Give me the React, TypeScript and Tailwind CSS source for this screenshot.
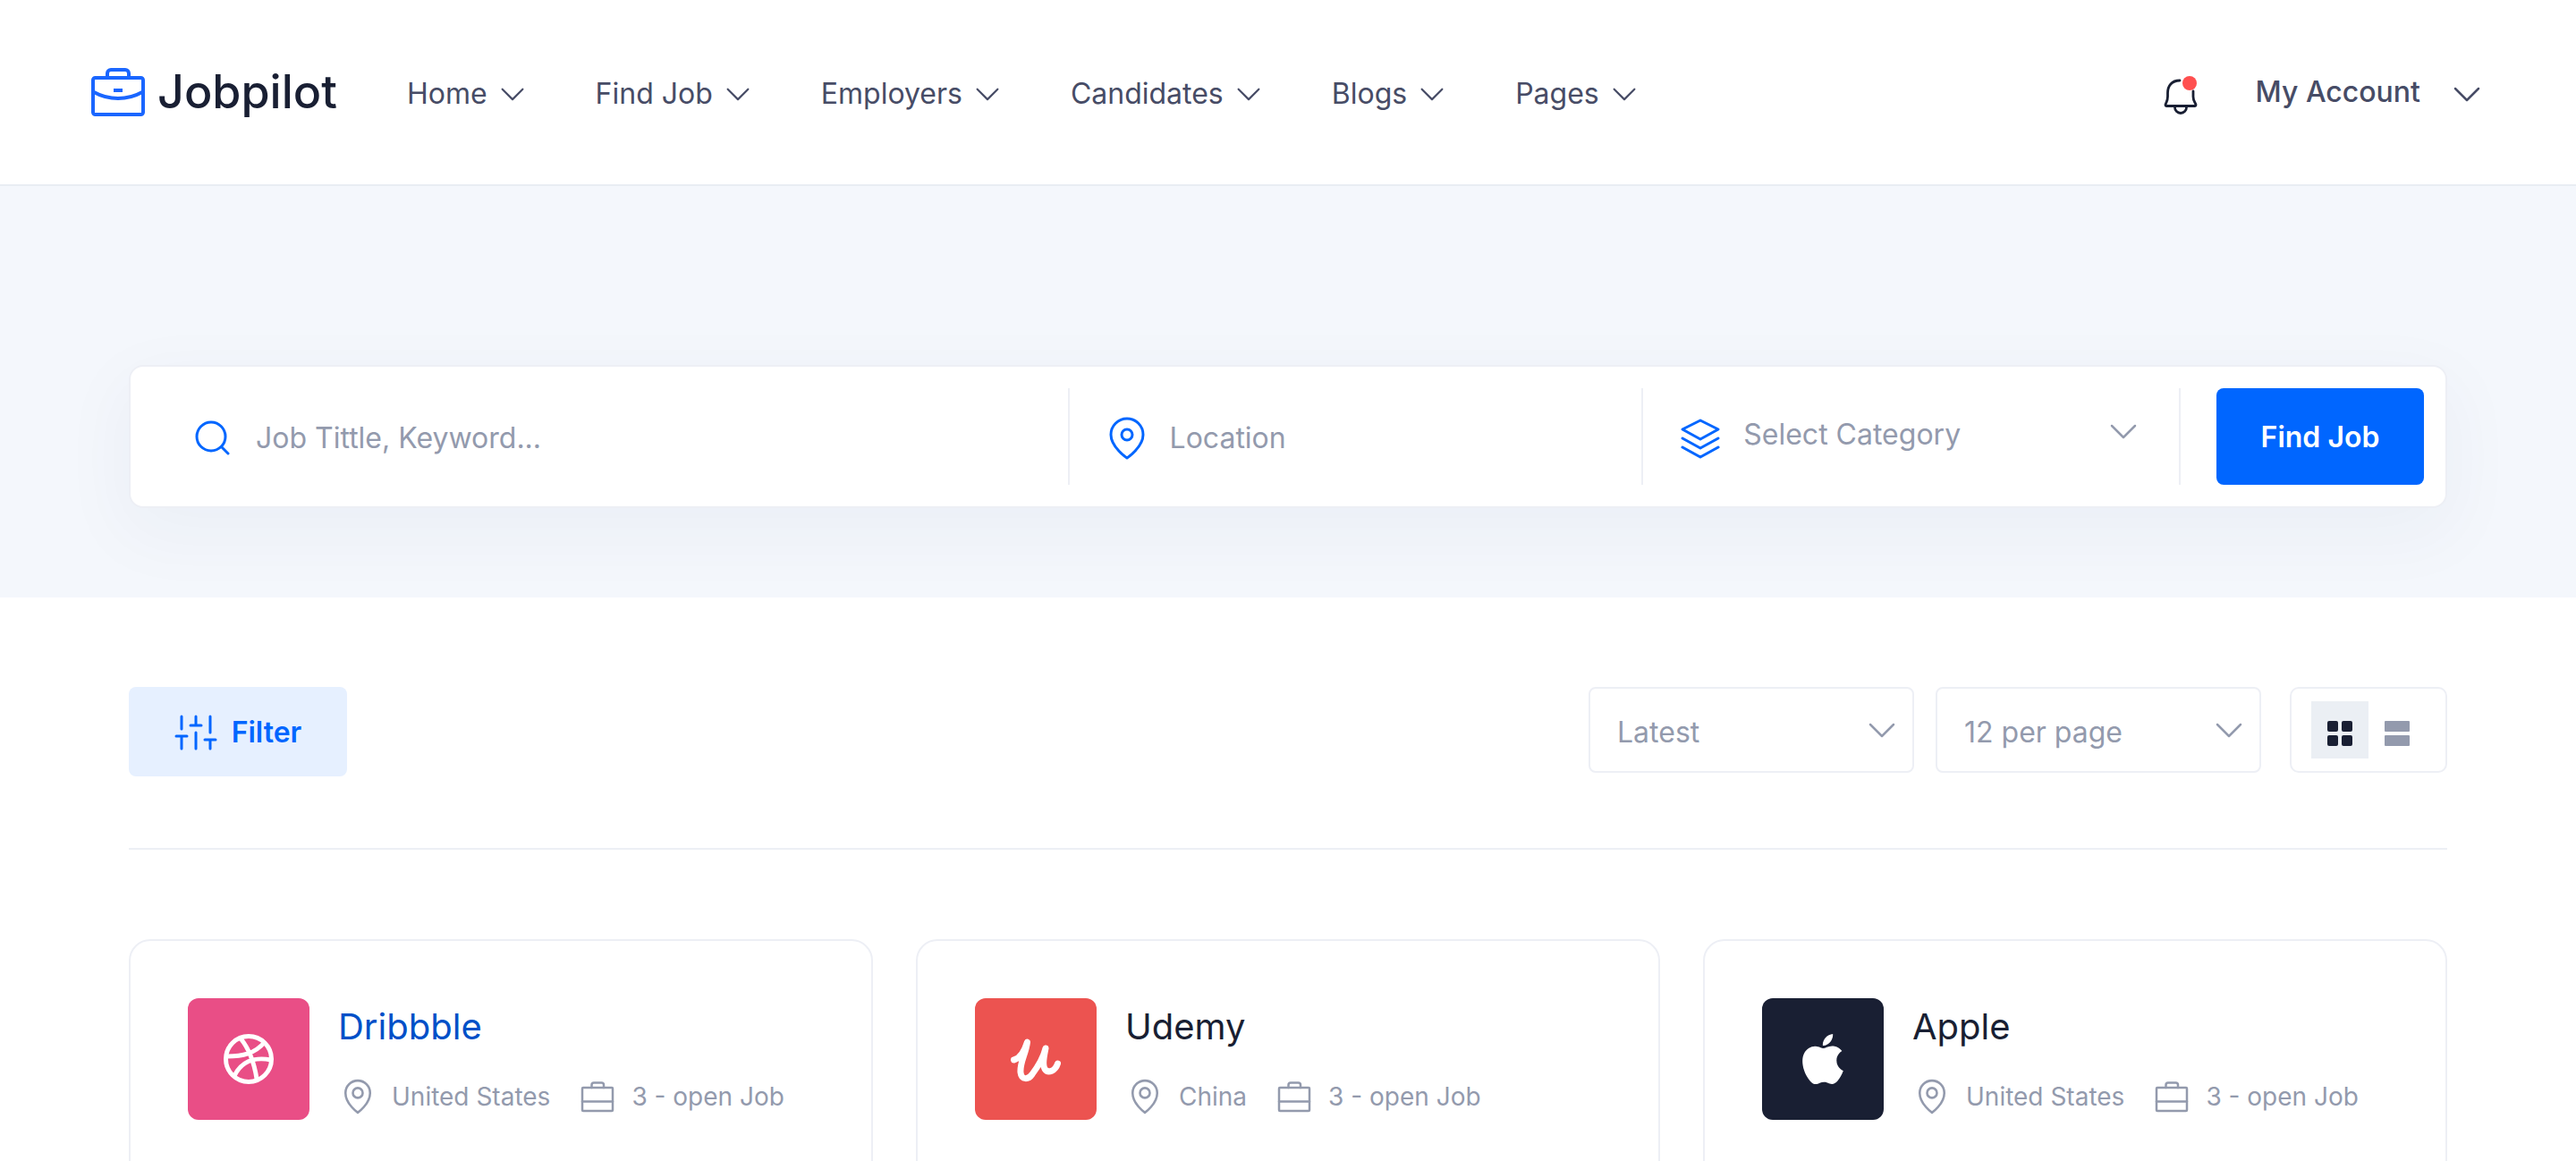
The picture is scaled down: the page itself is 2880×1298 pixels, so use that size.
import React from 'react';

type IconProps = { className?: string };

function ChevronIcon({ className = '' }: IconProps) {
  return (
    <svg viewBox="0 0 32 32" fill="none" stroke="currentColor" strokeWidth="2.5" strokeLinecap="round" strokeLinejoin="round" className={className} aria-hidden="true">
      <path d="M3 10 16 23 29 10" />
    </svg>
  );
}

function PinIcon({ className = '' }: IconProps) {
  return (
    <svg viewBox="0 0 48 48" fill="none" stroke="currentColor" strokeWidth="3" strokeLinecap="round" strokeLinejoin="round" className={className} aria-hidden="true">
      <circle cx="24" cy="20" r="6" />
      <path d="M42 20C42 34 24 46 24 46S6 34 6 20a18 18 0 0 1 36 0Z" />
    </svg>
  );
}

function SmallPinIcon({ className = '' }: IconProps) {
  return (
    <svg viewBox="0 0 256 256" fill="none" stroke="currentColor" strokeWidth="15" strokeLinecap="round" strokeLinejoin="round" className={className} aria-hidden="true">
      <circle cx="128" cy="104" r="32" />
      <path d="M208 104c0 72-80 128-80 128S48 176 48 104a80 80 0 0 1 160 0Z" />
    </svg>
  );
}

function BriefcaseIcon({ className = '' }: IconProps) {
  return (
    <svg viewBox="0 0 44 44" fill="none" stroke="currentColor" strokeWidth="2.5" strokeLinecap="round" strokeLinejoin="round" className={className} aria-hidden="true">
      <rect x="5" y="12" width="34" height="26" rx="1" />
      <path d="M15.500 12V9a2.500 2.500 0 0 1 2.500-2.500h8.500A2.500 2.500 0 0 1 29 9v3M5 27.500h34" />
    </svg>
  );
}

function SearchIcon({ className = '' }: IconProps) {
  return (
    <svg viewBox="0 0 48 48" fill="none" stroke="currentColor" strokeWidth="3" strokeLinecap="round" strokeLinejoin="round" className={className} aria-hidden="true">
      <circle cx="22" cy="22" r="16" />
      <path d="m34 34 7 7" />
    </svg>
  );
}

function LayersIcon({ className = '' }: IconProps) {
  return (
    <svg viewBox="0 0 48 48" fill="none" stroke="currentColor" strokeWidth="3" strokeLinecap="round" strokeLinejoin="round" className={className} aria-hidden="true">
      <path d="M4 14 24 4l20 10-20 11Z" />
      <path d="m4 24 20 11 20-11" />
      <path d="m4 34 20 11 20-11" />
    </svg>
  );
}

function SlidersIcon({ className = '' }: IconProps) {
  return (
    <svg viewBox="0 0 48 48" fill="none" stroke="currentColor" strokeWidth="3" strokeLinecap="round" className={className} aria-hidden="true">
      <path d="M8 6v14M2 28h12M8 28v14M24 6v10M18 16h12M24 24v18M40 6v18M34 32h12M40 32v10" />
    </svg>
  );
}

function BellIcon({ className = '' }: IconProps) {
  return (
    <svg viewBox="0 0 48 48" fill="none" stroke="currentColor" strokeWidth="2.8" strokeLinecap="round" strokeLinejoin="round" className={className} aria-hidden="true">
      <path d="M23 7C14 7 9.500 13 9.500 21v4c0 5-2 7-2.500 9 0 1 .5 1.500 1.500 1.500h31c1 0 1.500-.5 1.500-1.500-.5-2-3-4-3-9v-6" />
      <path d="M17.500 36v1a6.500 6.500 0 0 0 13 0v-1" />
      <circle cx="34" cy="10" r="8" fill="#ff4f4f" stroke="none" />
    </svg>
  );
}

function JobpilotMark({ className = '' }: IconProps) {
  return (
    <svg viewBox="0 0 60 56" fill="none" stroke="currentColor" strokeWidth="4" strokeLinejoin="round" className={className} aria-hidden="true">
      <rect x="2" y="12" width="56" height="41" rx="2.5" />
      <path d="M18 12V7a4 4 0 0 1 4-4h16a4 4 0 0 1 4 4v5" />
      <path d="M3 28c8 4.500 17 7 27 7s19-2.500 27-7M25 26h10" />
    </svg>
  );
}

function DribbbleLogo() {
  return (
    <svg viewBox="0 0 56 56" fill="none" stroke="currentColor" strokeWidth="5" className="size-14" aria-hidden="true">
      <circle cx="28" cy="28" r="25.500" />
      <path d="M19 5c9 11 15 26 18 45M4 25c17 0 31-3 42-16M12 47c7-15 21-22 41-18" />
    </svg>
  );
}

function UdemyLogo() {
  return (
    <svg viewBox="0 0 56 56" fill="none" stroke="currentColor" strokeWidth="7" strokeLinecap="round" strokeLinejoin="round" className="size-14" aria-hidden="true">
      <path d="M3.500 29C11 27 16 17 18.500 9 17 22 10 32 11 43c1 9 9 8 13 2 6-8 12-17 15-29-2 10-4 18-1 23 4 6 12 2 14.500-6" />
    </svg>
  );
}

function AppleLogo() {
  return (
    <svg viewBox="0 0 24 24" fill="currentColor" className="size-14" aria-hidden="true">
      <path d="M12.152 6.896c-.948 0-2.415-1.078-3.960-1.040-2.040.027-3.910 1.183-4.961 3.014-2.117 3.675-.546 9.103 1.519 12.090 1.013 1.454 2.208 3.090 3.792 3.039 1.520-.065 2.090-.987 3.935-.987 1.831 0 2.350.987 3.960.948 1.637-.026 2.676-1.480 3.676-2.948 1.156-1.688 1.636-3.325 1.662-3.415-.039-.013-3.182-1.221-3.220-4.857-.026-3.040 2.480-4.494 2.597-4.559-1.429-2.090-3.623-2.324-4.390-2.376-2-.156-3.675 1.090-4.610 1.090zM15.530 3.830c.843-1.012 1.400-2.427 1.245-3.830-1.207.052-2.662.805-3.532 1.818-.780.896-1.454 2.338-1.273 3.714 1.338.104 2.715-.688 3.559-1.701" />
    </svg>
  );
}

const navItems = ['Home', 'Find Job', 'Employers', 'Candidates', 'Blogs', 'Pages'];

const companies = [
  { name: 'Dribbble', place: 'United States', tile: 'bg-[#e94e86]', title: 'text-[#0050c8]', Logo: DribbbleLogo },
  { name: 'Udemy', place: 'China', tile: 'bg-[#ec5350]', title: 'text-[#191f33]', Logo: UdemyLogo },
  { name: 'Apple', place: 'United States', tile: 'bg-[#191f33]', title: 'text-[#191f33]', Logo: AppleLogo },
];

function Header() {
  return (
    <header className="flex h-52 items-center border-b-2 border-[#e9edf3] bg-white pr-[106px] pl-[102px]">
      <a href="#home" className="flex items-center gap-3.5">
        <JobpilotMark className="h-14 w-[60px] text-[#1a66ff]" />
        <span className="text-[52px] leading-[64px] font-medium text-[#191f33]">Jobpilot</span>
      </a>
      <nav className="ml-[78px] flex gap-[79px] pt-1">
        {navItems.map((item) => (
          <button key={item} type="button" className="flex items-center gap-3.5 text-[32px] leading-[48px] text-[#474c66]">
            {item}
            <ChevronIcon className="size-7" />
          </button>
        ))}
      </nav>
      <div className="ml-auto flex items-center">
        <button type="button" aria-label="Notifications" className="mt-2 mr-[60px] text-[#191f33]">
          <BellIcon className="size-12" />
        </button>
        <button type="button" className="flex items-center gap-9 text-[32px] leading-[48px] font-medium text-[#474c66]">
          My Account
          <ChevronIcon className="mt-1 size-8" />
        </button>
      </div>
    </header>
  );
}

function SearchBar() {
  return (
    <section className="bg-[#f4f7fc] px-36 pt-[200px] pb-[100px]">
      <form className="flex items-stretch rounded-2xl border-2 border-[#edeff5] bg-white p-6 text-[32px] shadow-[0_24px_80px_8px_rgba(20,40,110,0.04)]">
        <label className="flex h-[108px] grow-[980] basis-0 items-center gap-6 border-r-2 border-[#edeff5] pt-1 pl-11">
          <SearchIcon className="size-12 shrink-0 text-[#0066ff]" />
          <input type="text" aria-label="Keyword" placeholder="Job Tittle, Keyword..." className="min-w-0 flex-1 text-[#191f33] outline-none placeholder:text-[#939aad]" />
        </label>
        <label className="flex grow-[600] basis-0 items-center gap-6 border-r-2 border-[#edeff5] pt-1 pl-10">
          <PinIcon className="size-12 shrink-0 text-[#0066ff]" />
          <input type="text" aria-label="Location" placeholder="Location" className="min-w-0 flex-1 text-[#191f33] outline-none placeholder:text-[#939aad]" />
        </label>
        <div className="flex grow-[559] basis-0 items-center gap-6 border-r-2 border-[#edeff5] pt-1 pl-10">
          <LayersIcon className="size-12 shrink-0 text-[#0066ff]" />
          <div className="relative flex-1 pb-2">
            <select aria-label="Category" className="w-full appearance-none bg-transparent text-[#939aad] outline-none">
              <option>Select Category</option>
            </select>
            <ChevronIcon className="pointer-events-none absolute top-1 right-[46px] size-8 text-[#939aad]" />
          </div>
        </div>
        <button type="submit" className="ml-10 w-[232px] rounded-lg bg-[#0066ff] pt-0.5 font-semibold text-white">
          Find Job
        </button>
      </form>
    </section>
  );
}

function SortSelect({ label, value }: { label: string; value: string }) {
  return (
    <div className="relative w-[364px] text-[#939aad]">
      <select aria-label={label} className="h-24 w-full appearance-none rounded-lg border-2 border-[#edeff5] bg-white pt-1.5 pl-[30px] text-[32px] outline-none">
        <option>{value}</option>
      </select>
      <ChevronIcon className="pointer-events-none absolute top-8 right-5 size-8" />
    </div>
  );
}

function Toolbar() {
  return (
    <div className="flex items-start border-b-2 border-[#edeff5] pb-20">
      <button type="button" className="flex h-[100px] w-[244px] items-center justify-center gap-4 rounded-lg bg-[#e6f0ff] pt-0.5 text-[32px] font-semibold text-[#0066ff]">
        <SlidersIcon className="size-12" />
        Filter
      </button>
      <div className="ml-auto flex">
        <SortSelect label="Sort by" value="Latest" />
        <div className="ml-6">
          <SortSelect label="Results per page" value="12 per page" />
        </div>
        <div className="ml-8 flex h-24 rounded-[10px] border-2 border-[#edeff5] px-[22px] py-[14px]">
          <button type="button" aria-label="Grid view" aria-pressed="true" className="flex size-16 items-center justify-center bg-[#ebeff4] pt-2 text-[#191f33]">
            <svg viewBox="0 0 28 28" fill="currentColor" className="size-7" aria-hidden="true">
              <rect width="12" height="12" rx="2" />
              <rect x="16" width="12" height="12" rx="2" />
              <rect y="16" width="12" height="12" rx="2" />
              <rect x="16" y="16" width="12" height="12" rx="2" />
            </svg>
          </button>
          <button type="button" aria-label="List view" aria-pressed="false" className="flex size-16 items-center justify-center pt-2 text-[#939aad]">
            <svg viewBox="0 0 28 28" fill="currentColor" className="size-7" aria-hidden="true">
              <rect width="28" height="12" rx="1" />
              <rect y="16" width="28" height="12" rx="1" />
            </svg>
          </button>
        </div>
      </div>
    </div>
  );
}

export default function App() {
  return (
    <div className="h-screen overflow-hidden bg-white font-['Inter',sans-serif]">
      <Header />
      <SearchBar />
      <main className="px-36 pt-[100px]">
        <Toolbar />
        <div className="mt-[100px] grid grid-cols-3 gap-12">
          {companies.map(({ name, place, tile, title, Logo }) => (
            <article key={name} className="flex h-[420px] items-start gap-8 rounded-3xl border-2 border-[#edeff5] p-16">
              <div className={`flex size-[136px] shrink-0 items-center justify-center rounded-xl text-white ${tile}`}>
                <Logo />
              </div>
              <div className="pt-1">
                <h2 className={`text-[40px] leading-[56px] ${title}`}>
                  <a href={`#${name}`}>{name}</a>
                </h2>
                <div className="mt-7 flex gap-[31px] text-[28px] leading-[44px] text-[#939aad]">
                  <span className="flex items-center gap-4">
                    <SmallPinIcon className="size-11" />
                    {place}
                  </span>
                  <span className="flex items-center gap-4">
                    <BriefcaseIcon className="size-11" />3 - open Job
                  </span>
                </div>
              </div>
            </article>
          ))}
        </div>
      </main>
    </div>
  );
}
